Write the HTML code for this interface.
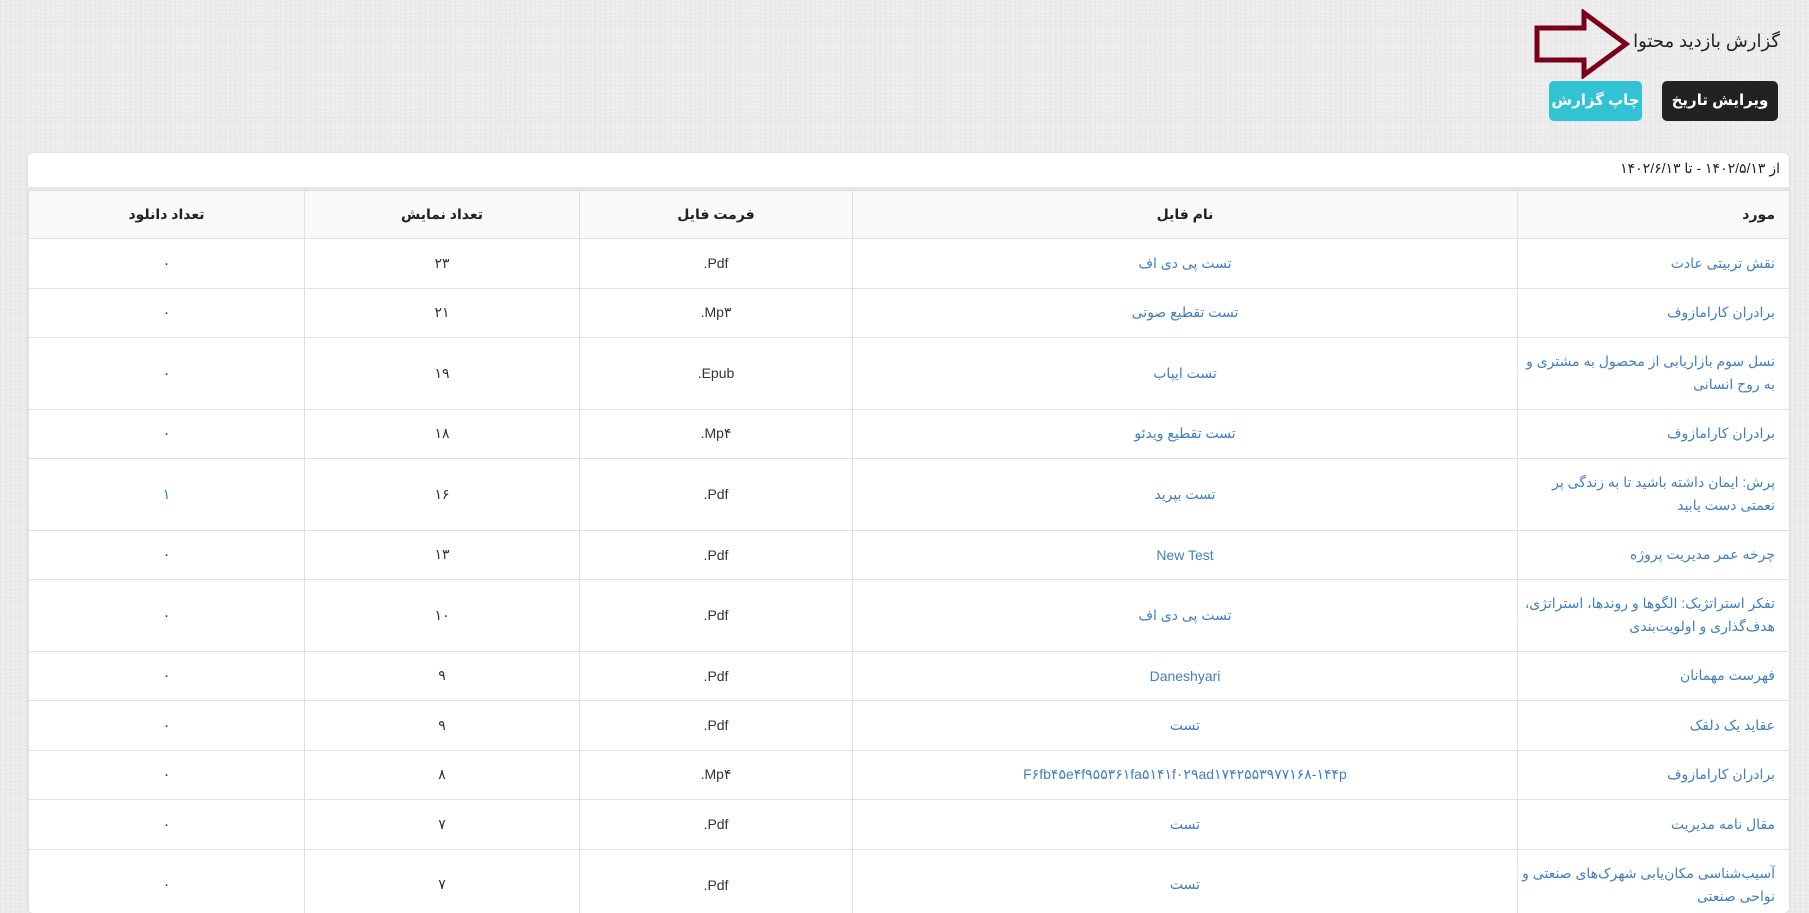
<!DOCTYPE html>
<html><head><meta charset="utf-8"><style>
html,body{margin:0;padding:0}
body{width:1809px;height:890px;overflow:hidden;position:relative;font-family:"Liberation Sans","DejaVu Sans",sans-serif;
background:#eeeeee;background-image:repeating-linear-gradient(0deg,rgba(0,0,0,.025) 0 1px,transparent 1px 4px),repeating-linear-gradient(90deg,rgba(0,0,0,.025) 0 1px,transparent 1px 5px);}
.title{position:absolute;right:29px;top:31px;font-size:18px;color:#222;direction:rtl;white-space:nowrap}
.btn{position:absolute;top:81px;height:40px;border-radius:5px;color:#fff;font-weight:bold;font-size:15px;line-height:40px;text-align:center;direction:rtl;white-space:nowrap}
.card{position:absolute;left:28px;top:153px;width:1761px;height:760px;background:#fff;border-radius:5px;box-shadow:0 0 2px rgba(0,0,0,.15);overflow:hidden}
.range{height:34px;line-height:30px;direction:rtl;padding-right:9px;font-size:14px;color:#222;border-bottom:3px solid #e6e6e6}
table{border-collapse:collapse;direction:rtl;width:1761px;table-layout:fixed;font-size:14px}
td,th{border:1px solid #e0e0e0;text-align:center;color:#333;padding:0 4px}
th{background:#f9f9f9;height:47px;font-weight:bold;color:#222}
th:first-child,td:first-child{text-align:right;padding-right:14px}
td.l{color:#3f7fc0}
td:first-child{color:#3f7fc0;line-height:23px}
tr.s td{height:48.5px}
tr.d td{height:70.5px}
</style></head><body>
<div class="title">گزارش بازدید محتوا</div>
<svg style="position:absolute;left:1532px;top:9px" width="102" height="70"><polygon points="5,19 52,19 52,4 94,35 52,66 52,51 5,51" fill="none" stroke="#7a0019" stroke-width="5"/></svg>
<div class="btn" style="left:1662px;width:116px;background:#222">ویرایش تاریخ</div>
<div class="btn" style="left:1549px;width:93px;background:#31c3d3">چاپ گزارش</div>
<div class="card">
<div class="range">از ۱۴۰۲/۵/۱۳ - تا ۱۴۰۲/۶/۱۳</div>
<table>
<colgroup><col style="width:272px"><col style="width:665px"><col style="width:273px"><col style="width:275px"><col style="width:276px"></colgroup>
<tr><th>مورد</th><th>نام فایل</th><th>فرمت فایل</th><th>تعداد نمایش</th><th>تعداد دانلود</th></tr>
<tr class="s"><td>نقش تربیتی عادت</td><td class="l">تست پی دی اف</td><td>Pdf.</td><td>۲۳</td><td>۰</td></tr>
<tr class="s"><td>برادران کارامازوف</td><td class="l">تست تقطیع صوتی</td><td>Mp۳.</td><td>۲۱</td><td>۰</td></tr>
<tr class="d"><td>نسل سوم بازاریابی از محصول به مشتری و<br>به روح انسانی</td><td class="l">تست ایپاب</td><td>Epub.</td><td>۱۹</td><td>۰</td></tr>
<tr class="s"><td>برادران کارامازوف</td><td class="l">تست تقطیع ویدئو</td><td>Mp۴.</td><td>۱۸</td><td>۰</td></tr>
<tr class="d"><td>پرش: ایمان داشته باشید تا به زندگی پر<br>نعمتی دست یابید</td><td class="l">تست بپرید</td><td>Pdf.</td><td>۱۶</td><td class="l">۱</td></tr>
<tr class="s"><td>چرخه عمر مدیریت پروژه</td><td class="l">New Test</td><td>Pdf.</td><td>۱۳</td><td>۰</td></tr>
<tr class="d"><td>تفکر استراتژیک: الگوها و روندها، استراتژی،<br>هدف‌گذاری و اولویت‌بندی</td><td class="l">تست پی دی اف</td><td>Pdf.</td><td>۱۰</td><td>۰</td></tr>
<tr class="s"><td>فهرست مهمانان</td><td class="l">Daneshyari</td><td>Pdf.</td><td>۹</td><td>۰</td></tr>
<tr class="s"><td>عقاید یک دلقک</td><td class="l">تست</td><td>Pdf.</td><td>۹</td><td>۰</td></tr>
<tr class="s"><td>برادران کارامازوف</td><td class="l">F۶fb۴۵e۴f۹۵۵۳۶۱fa۵۱۴۱f۰۲۹ad۱۷۴۲۵۵۳۹۷۷۱۶۸-۱۴۴p</td><td>Mp۴.</td><td>۸</td><td>۰</td></tr>
<tr class="s"><td>مقال نامه مدیریت</td><td class="l">تست</td><td>Pdf.</td><td>۷</td><td>۰</td></tr>
<tr class="d"><td>آسیب‌شناسی مکان‌یابی شهرک‌های صنعتی و<br>نواحی صنعتی</td><td class="l">تست</td><td>Pdf.</td><td>۷</td><td>۰</td></tr>
</table>
</div>
</body></html>
